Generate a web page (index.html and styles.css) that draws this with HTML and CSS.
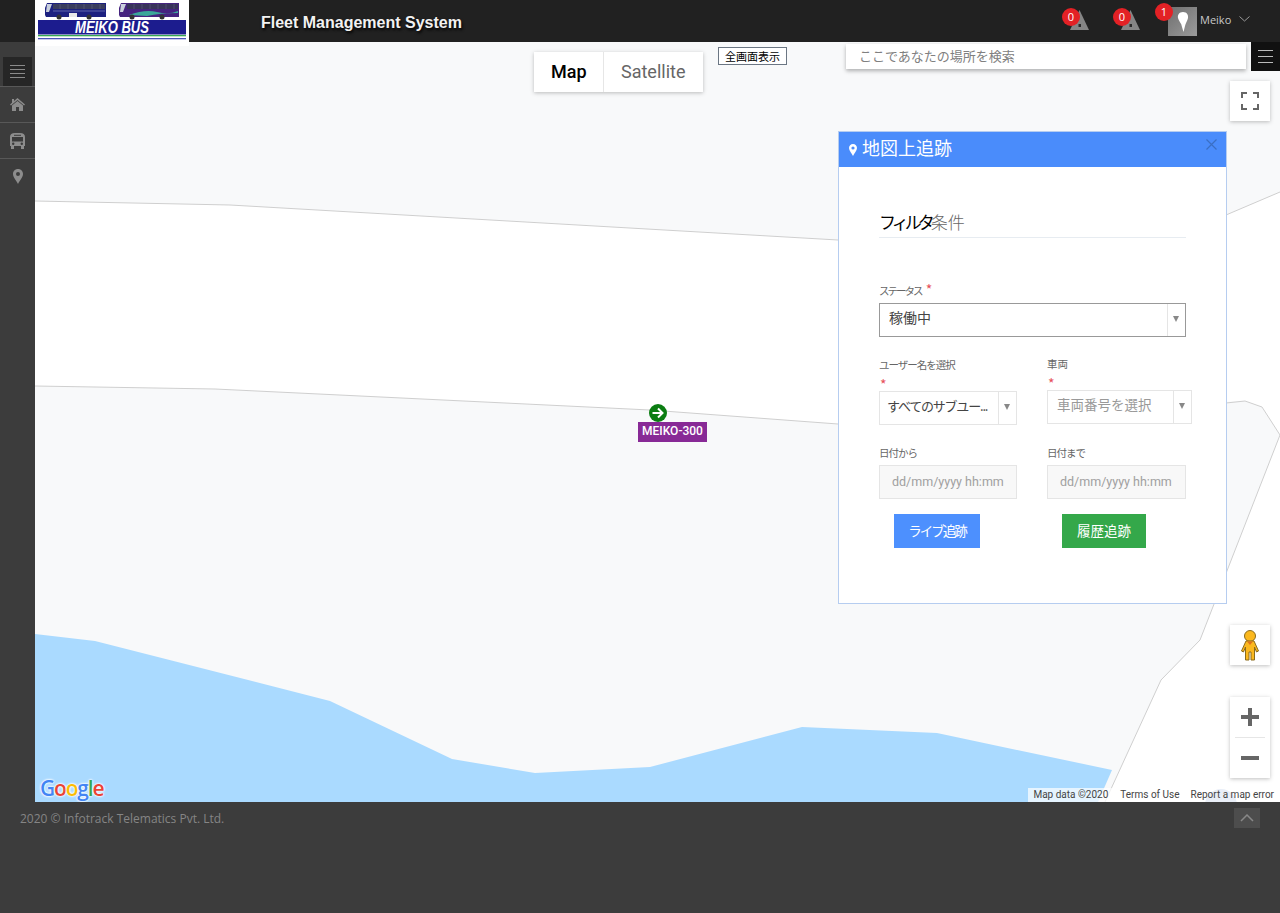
FILE: index.html
```html
<!DOCTYPE html>
<html lang="ja">

<head>
    <meta charset="UTF-8">
    <meta name="viewport" content="width=device-width, initial-scale=1.0">
    <title>Fleet Management System</title>
    <link rel="stylesheet" href="styles.css">
</head>

<body>
    <header class="topbar">
        <div class="logo">
            <svg width="154" height="46" viewBox="0 0 154 46">
                <rect width="154" height="46" fill="#fff" />
                <!-- bus 1 -->
                <path d="M10 8 L12 3 H71 V17 H11 L10 15 Z" fill="#1d2180" />
                <path d="M12 4 H17 L14 12 H11 Z" fill="#c9d0dc" />
                <rect x="18" y="4" width="52" height="5" fill="#3a3d5e" />
                <path d="M25 4 V9 M33 4 V9 M41 4 V9 M49 4 V9 M57 4 V9 M65 4 V9" stroke="#6a6d8a" stroke-width=".5" />
                <rect x="34" y="13" width="8" height="4" fill="#e8e8e8" />
                <path d="M18 11 H70" stroke="#8c90c8" stroke-width=".6" />
                <circle cx="24" cy="17" r="2.500" fill="#333" />
                <circle cx="54" cy="17" r="2.500" fill="#333" />
                <!-- bus 2 -->
                <path d="M84 8 L86 3 H144 V17 H85 L84 15 Z" fill="#45237f" />
                <path d="M86 4 H91 L88 12 H85 Z" fill="#c9d0dc" />
                <rect x="92" y="4" width="51" height="5" fill="#38335a" />
                <path d="M99 4 V9 M107 4 V9 M115 4 V9 M123 4 V9 M131 4 V9 M139 4 V9" stroke="#66628a" stroke-width=".5" />
                <path d="M94 15 Q110 9 122 12 T143 11 V13 Q125 13 112 16 Z" fill="#3aa79a" />
                <circle cx="97" cy="17" r="2.500" fill="#333" />
                <circle cx="127" cy="17" r="2.500" fill="#333" />
                <!-- banner -->
                <rect x="3" y="20" width="148" height="14.500" fill="#1c1c8e" />
                <rect x="3" y="35" width="148" height="1.300" fill="#35a853" />
                <rect x="3" y="38" width="148" height="1.300" fill="#4a52b8" />
                <text x="77" y="33" class="logo-text" text-anchor="middle" textLength="74" lengthAdjust="spacingAndGlyphs">MEIKO BUS</text>
            </svg>
        </div>
        <div class="app-title">Fleet Management System</div>
        <div class="topbar-right">
            <div class="alert">
                <span class="badge">0</span>
                <svg width="19" height="20" viewBox="0 0 19 20">
                    <path d="M9.500 0 L19 20 H0 Z" fill="#858585" />
                    <rect x="8.500" y="14" width="2.500" height="3" fill="#2a2a2a" />
                </svg>
            </div>
            <div class="alert">
                <span class="badge">0</span>
                <svg width="19" height="20" viewBox="0 0 19 20">
                    <path d="M9.500 0 L19 20 H0 Z" fill="#858585" />
                    <rect x="8.500" y="14" width="2.500" height="3" fill="#2a2a2a" />
                </svg>
            </div>
            <div class="user">
                <span class="badge badge-user">1</span>
                <div class="avatar">
                    <svg width="12" height="20" viewBox="0 0 12 20">
                        <path d="M6 0 C10 0 11.500 3 11 6 C10.500 9 8.500 11 8 14 L6.500 20 L5 15 C4.500 11 1.500 9 1 6 C.5 3 2 0 6 0 Z" fill="#fff" />
                    </svg>
                </div>
                <span class="user-name">Meiko</span>
                <svg class="user-caret" width="11" height="6" viewBox="0 0 11 6">
                    <path d="M.5 .5 L5.500 5 L10.500 .5" fill="none" stroke="#999" />
                </svg>
            </div>
        </div>
    </header>

    <div class="main">
        <nav class="sidebar">
            <div class="side-toggle">
                <svg width="15" height="13" viewBox="0 0 15 13">
                    <path d="M0 .5 H15 M0 4.500 H15 M0 8.500 H15 M0 12.500 H15" stroke="#8a8a8a" />
                </svg>
            </div>
            <div class="side-item">
                <svg width="15" height="13" viewBox="0 0 15 13">
                    <path d="M7.500 0 L15 6.500 L14 7.500 L7.500 2 L1 7.500 L0 6.500 L2 4.700 V1 H4 V3 Z" fill="#8c8c8c" />
                    <path d="M7.500 3 L13 7.600 V13 H9 V9 H6 V13 H2 V7.600 Z" fill="#8c8c8c" />
                </svg>
            </div>
            <div class="side-item">
                <svg width="15" height="16" viewBox="0 0 15 16">
                    <path d="M5 0 H10 Q15 0 15 4 V13 H14 V16 H11 V13 H4 V16 H1 V13 H0 V4 Q0 0 5 0 Z" fill="#8c8c8c" />
                    <rect x="2" y="4" width="11" height="4.500" fill="#3a3a3a" />
                    <rect x="4" y="1.800" width="7" height="1" fill="#3a3a3a" />
                    <circle cx="3.200" cy="10.800" r="1.200" fill="#3a3a3a" />
                    <circle cx="11.800" cy="10.800" r="1.200" fill="#3a3a3a" />
                </svg>
            </div>
            <div class="side-item">
                <svg width="10" height="15" viewBox="0 0 10 15">
                    <path fill-rule="evenodd" d="M5 0 C8 0 10 2.200 10 5 C10 8 6.500 12 5 15 C3.500 12 0 8 0 5 C0 2.200 2 0 5 0 Z M5 3 A2 2 0 1 0 5 7 A2 2 0 1 0 5 3 Z" fill="#8c8c8c" />
                </svg>
            </div>
        </nav>

        <div class="map">
            <svg class="map-base" width="1245" height="760" viewBox="35 42 1245 760">
                <rect x="35" y="42" width="1245" height="760" fill="#fff" />
                <path d="M35 42 H1280 V192 L1226 215 L838 240 L230 205 L35 201 Z" fill="#f8f9fa" />
                <path d="M35 386 L215 389 L650 410 L838 424 L1220 402 L1245 401 L1262 407 L1280 435 L1200 640 L1161 680 L1105 802 H35 Z" fill="#f8f9fa" />
                <path d="M35 201 L230 205 L838 240 M1226 215 L1280 192 M35 386 L215 389 L650 410 L838 424 M1226 403 L1245 401 L1262 407 L1280 435 L1200 640 L1161 680 L1105 802" fill="none" stroke="#cfcfcf" />
                <path d="M35 634 L95 641 L330 701 L452 759 L535 773 L650 767 L802 727 L937 733 L1112 770 L1098 802 H35 Z" fill="#aadaff" />
                <circle cx="1221" cy="805" r="16" fill="#b5c7e5" />
            </svg>

            <div class="map-type">
                <div class="map-type-btn active">Map</div>
                <div class="map-type-btn">Satellite</div>
            </div>
            <button class="fullscreen-text">全画面表示</button>

            <div class="search-box">ここであなたの場所を検索</div>
            <div class="search-menu">
                <svg width="15" height="13" viewBox="0 0 15 13">
                    <path d="M0 .5 H15 M0 6.500 H15 M0 12.500 H15" stroke="#bbb" />
                </svg>
            </div>

            <div class="map-btn fullscreen-btn">
                <svg width="18" height="18" viewBox="0 0 18 18">
                    <path d="M1 6 V1 H6 M12 1 H17 V6 M17 12 V17 H12 M6 17 H1 V12" fill="none" stroke="#666" stroke-width="2" />
                </svg>
            </div>
            <div class="map-btn pegman">
                <svg width="18" height="31" viewBox="0 0 18 31">
                    <circle cx="9" cy="6" r="5.500" fill="#fbb81e" stroke="#8a6b1c" />
                    <path d="M5 11 H13 L17.500 21 L15.500 22 L13.500 17 V30 H10 V22 H8 V30 H4.500 V17 L2.500 22 L.5 21 Z" fill="#fbb81e" stroke="#8a6b1c" />
                    <path d="M6 11.500 H12 L9 15 Z" fill="#e0701c" />
                </svg>
            </div>
            <div class="map-zoom">
                <div class="map-zoom-btn">
                    <svg width="18" height="18" viewBox="0 0 18 18">
                        <path d="M0 9 H18 M9 0 V18" stroke="#666" stroke-width="4" />
                    </svg>
                </div>
                <div class="map-zoom-sep"></div>
                <div class="map-zoom-btn">
                    <svg width="18" height="4" viewBox="0 0 18 4">
                        <rect width="18" height="4" fill="#666" />
                    </svg>
                </div>
            </div>

            <div class="vehicle">
                <svg width="18" height="18" viewBox="0 0 18 18">
                    <circle cx="9" cy="9" r="9" fill="#0b7d12" />
                    <path d="M3.500 9 H13 M9 4.500 L13.500 9 L9 13.500" fill="none" stroke="#fff" stroke-width="2" />
                </svg>
                <div class="vehicle-label">MEIKO-300</div>
            </div>

            <div class="google-logo"><span class="g-blue">G</span><span class="g-red">o</span><span class="g-yellow">o</span><span class="g-blue">g</span><span class="g-green">l</span><span class="g-red">e</span></div>
            <div class="attribution">
                <span>Map data ©2020</span>
                <span>Terms of Use</span>
                <span>Report a map error</span>
            </div>

            <section class="panel">
                <div class="panel-head">
                    <svg width="8" height="12" viewBox="0 0 10 15">
                        <path fill-rule="evenodd" d="M5 0 C8 0 10 2.200 10 5 C10 8 6.500 12 5 15 C3.500 12 0 8 0 5 C0 2.200 2 0 5 0 Z M5 3 A2 2 0 1 0 5 7 A2 2 0 1 0 5 3 Z" fill="#fff" />
                    </svg>
                    <span class="panel-title">地図上追跡</span>
                    <svg class="panel-close" width="11" height="11" viewBox="0 0 11 11">
                        <path d="M.5 .5 L10.500 10.500 M10.500 .5 L.5 10.500" stroke="#3a6fc4" stroke-width="1.200" />
                    </svg>
                </div>
                <form class="panel-body">
                    <h3 class="filter-title"><b>フィルタ</b>条件</h3>

                    <label class="field-label label-status">ステータス <i>*</i></label>
                    <div class="select select-status">
                        <span class="select-value">稼働中</span>
                        <span class="select-arrow"></span>
                    </div>

                    <div class="form-row row-user">
                        <div>
                            <label class="field-label label-kana">ユーザー名を選択</label>
                            <div class="star">*</div>
                            <div class="select">
                                <span class="select-value value-user">すべてのサブユー...</span>
                                <span class="select-arrow"></span>
                            </div>
                        </div>
                        <div class="col-vehicle">
                            <label class="field-label">車両</label>
                            <div class="star">*</div>
                            <div class="select">
                                <span class="select-value placeholder">車両番号を選択</span>
                                <span class="select-arrow"></span>
                            </div>
                        </div>
                    </div>

                    <div class="form-row row-date">
                        <div>
                            <label class="field-label label-kana">日付から</label>
                            <div class="date-input">dd/mm/yyyy hh:mm</div>
                        </div>
                        <div>
                            <label class="field-label label-kana">日付まで</label>
                            <div class="date-input">dd/mm/yyyy hh:mm</div>
                        </div>
                    </div>

                    <div class="form-row row-btn">
                        <div><button type="button" class="btn btn-live">ライブ追跡</button></div>
                        <div><button type="button" class="btn btn-history">履歴追跡</button></div>
                    </div>
                </form>
            </section>
        </div>
    </div>

    <footer class="footer">
        <span>2020 © Infotrack Telematics Pvt. Ltd.</span>
        <div class="to-top">
            <svg width="14" height="8" viewBox="0 0 14 8">
                <path d="M1 7 L7 1 L13 7" fill="none" stroke="#888" stroke-width="1.500" />
            </svg>
        </div>
    </footer>
</body>

</html>
```

FILE: styles.css
```css
* {
    box-sizing: border-box;
}

body {
    margin: 0;
    font-family: "Noto Sans CJK JP", "Open Sans", sans-serif;
    background-color: #3c3c3c;
}

.topbar {
    display: flex;
    align-items: flex-start;
    height: 42px;
    padding-left: 35px;
    background-color: #212121;
    position: relative;
    z-index: 5;
}

.logo {
    width: 154px;
    height: 46px;
}

.logo-text {
    font-family: "Liberation Sans", sans-serif;
    font-size: 16px;
    font-style: italic;
    font-weight: bold;
    fill: #fff;
}

.app-title {
    margin-left: 72px;
    font-family: "Liberation Sans", sans-serif;
    font-size: 16px;
    font-weight: bold;
    line-height: 45px;
    color: #f2f2f2;
    text-shadow: 1px 2px 3px #000;
}

.topbar-right {
    display: flex;
    margin-left: auto;
}

.alert {
    position: relative;
    width: 19px;
    height: 20px;
    margin-top: 10px;
    margin-right: 32px;
}

.badge {
    position: absolute;
    left: -8px;
    top: -2px;
    width: 18px;
    height: 18px;
    border-radius: 50%;
    background-color: #e32125;
    color: #fff;
    font-family: "Open Sans", sans-serif;
    font-size: 11px;
    line-height: 18px;
    text-align: center;
}

.user {
    display: flex;
    position: relative;
    width: 112px;
    margin-left: -4px;
    padding-top: 7px;
}

.badge-user {
    left: -13px;
    top: 3px;
}

.avatar {
    display: flex;
    align-items: center;
    justify-content: center;
    width: 29px;
    height: 29px;
    background: linear-gradient(135deg, #6f6f6f, #9b9b9b);
}

.user-name {
    margin-left: 3px;
    font-family: "Open Sans", sans-serif;
    font-size: 11px;
    line-height: 26px;
    color: #c8c8c8;
}

.user-caret {
    margin-left: 8px;
    margin-top: 9px;
}

.main {
    display: flex;
    height: 760px;
}

.sidebar {
    width: 35px;
    padding-top: 15px;
    background-color: #3c3c3c;
}

.side-toggle {
    display: flex;
    align-items: center;
    justify-content: center;
    width: 29px;
    height: 29px;
    margin-left: 3px;
    background-color: #262626;
}

.side-item {
    display: flex;
    align-items: center;
    justify-content: center;
    height: 36px;
    border-top: 1px solid #585858;
}

.map {
    position: relative;
    flex: 1;
    overflow: hidden;
}

.map-base {
    display: block;
}

.map-type {
    position: absolute;
    left: 499px;
    top: 10px;
    display: flex;
    width: 169px;
    height: 40px;
    background-color: #fff;
    box-shadow: 0 1px 4px rgba(0, 0, 0, 0.25);
}

.map-type-btn {
    flex: 1;
    padding: 0 0 0 17px;
    font-family: Roboto, sans-serif;
    font-size: 18px;
    line-height: 40px;
    color: #666;
    border-left: 1px solid #e6e6e6;
}

.map-type-btn.active {
    flex: 0 0 69px;
    padding-left: 17px;
    font-weight: 500;
    color: #000;
    border-left: none;
}

.fullscreen-text {
    position: absolute;
    left: 683px;
    top: 5px;
    width: 69px;
    height: 18px;
    padding: 0;
    border: 1px solid #6b7683;
    background-color: #fff;
    color: #000;
    font-family: "Noto Sans CJK JP", sans-serif;
    font-size: 11px;
    line-height: 15px;
}

.search-box {
    position: absolute;
    left: 811px;
    top: 2px;
    width: 400px;
    height: 25px;
    padding-left: 13px;
    background-color: #fff;
    box-shadow: 0 2px 4px rgba(0, 0, 0, 0.3);
    font-size: 13px;
    line-height: 24px;
    color: #808080;
}

.search-menu {
    position: absolute;
    right: 0;
    top: 0;
    display: flex;
    align-items: center;
    justify-content: center;
    width: 29px;
    height: 29px;
    background-color: #111;
}

.map-btn {
    position: absolute;
    right: 10px;
    display: flex;
    align-items: center;
    justify-content: center;
    width: 40px;
    height: 40px;
    background-color: #fff;
    box-shadow: 0 1px 4px rgba(0, 0, 0, 0.25);
}

.fullscreen-btn {
    top: 39px;
}

.pegman {
    top: 583px;
}

.map-zoom {
    position: absolute;
    right: 10px;
    top: 655px;
    width: 40px;
    height: 81px;
    background-color: #fff;
    box-shadow: 0 1px 4px rgba(0, 0, 0, 0.25);
}

.map-zoom-btn {
    display: flex;
    align-items: center;
    justify-content: center;
    height: 40px;
}

.map-zoom-sep {
    height: 1px;
    margin: 0 5px;
    background-color: #e6e6e6;
}

.vehicle {
    position: absolute;
    left: 603px;
    top: 362px;
    width: 69px;
}

.vehicle svg {
    display: block;
    margin-left: 11px;
}

.vehicle-label {
    height: 20px;
    background-color: #882a96;
    color: #fff;
    font-family: Roboto, sans-serif;
    font-size: 12px;
    font-weight: 500;
    line-height: 19px;
    text-align: center;
}

.google-logo {
    position: absolute;
    left: 5px;
    bottom: 0;
    font-family: "Open Sans", sans-serif;
    font-size: 21px;
    font-weight: 600;
    line-height: 28px;
    letter-spacing: -1.200px;
    text-shadow: 0 0 2px #fff, 0 0 2px #fff, 0 0 3px #fff;
}

.g-blue {
    color: #4285f4;
}

.g-red {
    color: #ea4335;
}

.g-yellow {
    color: #fbbc05;
}

.g-green {
    color: #34a853;
}

.attribution {
    position: absolute;
    right: 0;
    bottom: 0;
    display: flex;
    gap: 1px;
    font-family: Roboto, sans-serif;
    font-size: 10px;
    line-height: 14px;
    color: #444;
}

.attribution span {
    padding: 0 5px;
    background-color: rgba(255, 255, 255, 0.7);
}

.attribution span:first-child,
.attribution span:last-child {
    padding-right: 6px;
}

.panel {
    position: absolute;
    left: 803px;
    top: 89px;
    width: 389px;
    height: 473px;
    background-color: #fff;
    border: 1px solid #b6cdf0;
}

.panel-head {
    position: relative;
    display: flex;
    align-items: center;
    gap: 5px;
    height: 35px;
    padding-left: 10px;
    background-color: #4a8cfb;
    color: #fff;
}

.panel-title {
    margin-top: -5px;
    font-size: 18px;
    line-height: 30px;
}

.panel-close {
    position: absolute;
    right: 9px;
    top: 7px;
}

.panel-body {
    padding: 44px 40px 0;
}

.filter-title {
    margin: 0 0 45px;
    height: 27px;
    border-bottom: 1px solid #e7ecf1;
    font-size: 17px;
    font-weight: 300;
    line-height: 22px;
    color: #666;
}

.filter-title b {
    font-weight: 400;
    letter-spacing: -4px;
    color: #000;
}

.field-label {
    display: block;
    height: 15px;
    font-size: 10.500px;
    line-height: 16px;
    color: #666;
}

.label-status {
    letter-spacing: -2px;
}

.label-kana {
    letter-spacing: -1px;
}

.field-label i,
.star {
    font-style: normal;
    font-size: 14px;
    letter-spacing: 0;
    color: #e7505a;
}

.label-status i {
    margin-left: 4px;
    line-height: 0;
}

.star {
    height: 19px;
    padding-left: 1px;
    padding-top: 3px;
    line-height: 18px;
}

.select {
    display: flex;
    height: 34px;
    background-color: #fff;
    border: 1px solid #e5e5e5;
}

.select-status {
    margin-top: 5px;
    border-color: #999;
}

.select-value {
    flex: 1;
    padding-left: 9px;
    font-size: 14px;
    line-height: 27px;
    color: #444;
    white-space: nowrap;
}

.value-user {
    padding-left: 7px;
    font-size: 13px;
    letter-spacing: -1.200px;
}

.select-value.placeholder {
    font-size: 13.500px;
    color: #999;
}

.select-arrow {
    position: relative;
    width: 18px;
    border-left: 1px solid #e5e5e5;
}

.select-arrow::after {
    content: "";
    position: absolute;
    left: 5px;
    top: 12px;
    border-top: 6px solid #888;
    border-left: 3px solid transparent;
    border-right: 3px solid transparent;
}

.form-row {
    display: grid;
    grid-template-columns: 138px 139px;
    gap: 30px;
}

.row-user {
    margin-top: 20px;
}

.col-vehicle {
    width: 145px;
    margin-top: -1px;
}

.row-date {
    margin-top: 20px;
}

.date-input {
    height: 34px;
    margin-top: 5px;
    padding-left: 12px;
    background-color: #f8f8f8;
    border: 1px solid #e5e5e5;
    font-family: Roboto, sans-serif;
    font-size: 12.500px;
    line-height: 31px;
    color: #a0a0a0;
}

.row-btn {
    margin-top: 15px;
}

.btn {
    display: block;
    height: 34px;
    margin-left: 15px;
    padding: 0 0 3px;
    border: none;
    color: #fff;
    font-family: "Noto Sans CJK JP", sans-serif;
    font-size: 13.500px;
    line-height: 30px;
}

.btn-live {
    width: 86px;
    letter-spacing: -2px;
    background-color: #4d90fe;
}

.btn-history {
    width: 84px;
    background-color: #34a84a;
}

.footer {
    display: flex;
    justify-content: space-between;
    align-items: flex-start;
    height: 111px;
    padding: 6px 20px 0;
    background-color: #3c3c3c;
    font-family: "Open Sans", sans-serif;
    font-size: 12px;
    line-height: 22px;
    color: #858585;
}

.to-top {
    display: flex;
    align-items: center;
    justify-content: center;
    width: 26px;
    height: 20px;
    background-color: #4d4d4d;
}
```
